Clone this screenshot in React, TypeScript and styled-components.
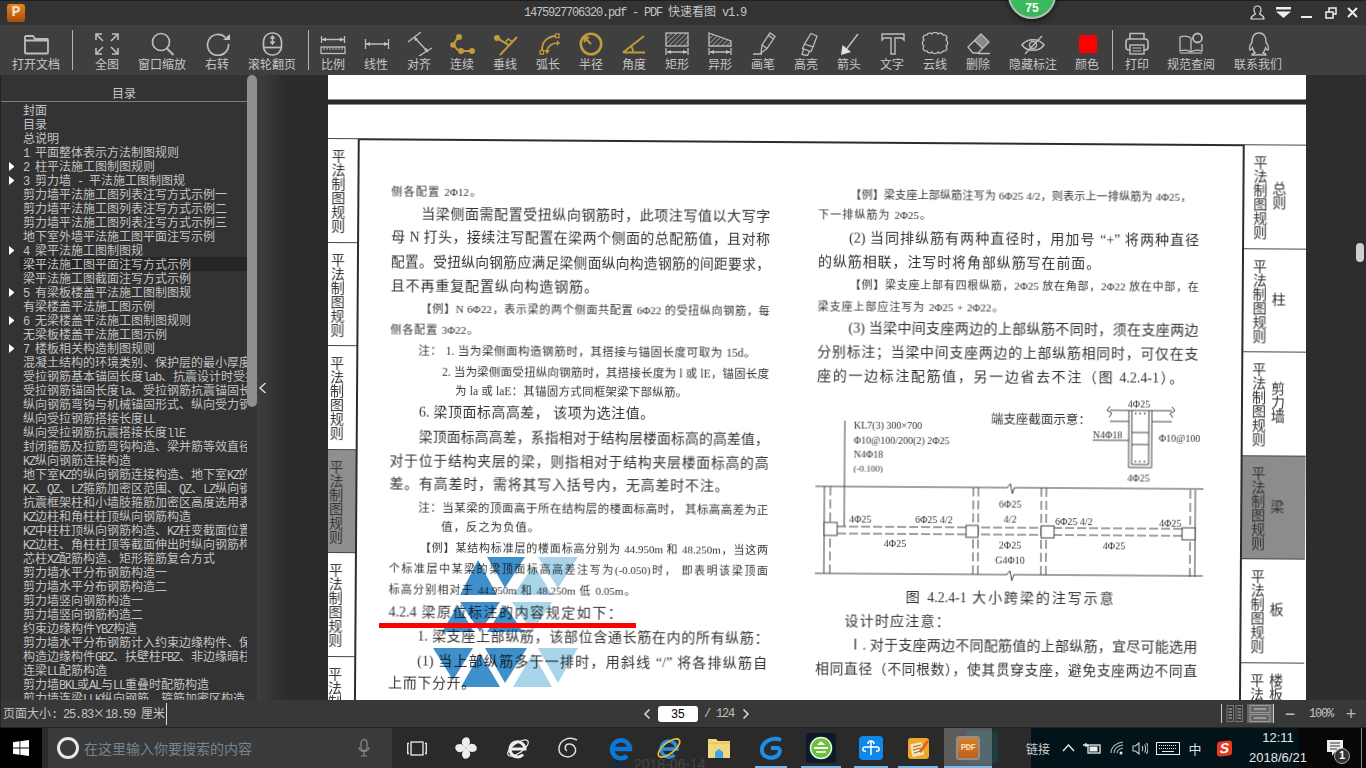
import React from 'react';
import styled, { createGlobalStyle } from 'styled-components';

const UI = '"Noto Sans CJK SC", sans-serif';
const SCAN = '"Liberation Serif", "Noto Sans CJK SC", serif';

const Global = createGlobalStyle`
  html, body { margin: 0; padding: 0; background: #2d2d2d; overflow: hidden; }
  * { box-sizing: border-box; }
`;

const App_ = styled.div`
  position: relative;
  width: 1366px;
  height: 768px;
  overflow: hidden;
  font-family: ${UI};
  font-size: 12px;
  color: #c8c8c8;
  background: #2d2d2d;
`;

/* ---------- title bar ---------- */
const TitleBar = styled.div`
  height: 25px;
  background: #333;
  border-top: 1px solid #1e1e1e;
  display: flex;
  align-items: center;
  padding-left: 7px;
`;
const Logo = styled.div`
  width: 18px;
  height: 18px;
  border-radius: 3px;
  background: linear-gradient(#e8851f, #a84d0a);
  color: #f4e2c8;
  font: bold 15px/18px "Liberation Mono", monospace;
  text-align: center;
  margin-top: -1px;
`;
const TitleText = styled.div`
  margin-left: 499px;
  color: #c4c4c4;
  white-space: pre;
  line-height: 14px;
  margin-top: -2px;
`;
const Controls = styled.div`
  margin-left: auto;
  display: flex;
  padding-right: 6px;
  margin-top: -1px;
`;
const Ctl = styled.div<{ $w: number }>`
  width: ${(p) => p.$w}px;
  display: flex;
  justify-content: center;
  align-items: center;
  height: 24px;
`;
const Badge = styled.div`
  position: absolute;
  left: 1008px;
  top: -29px;
  width: 48px;
  height: 48px;
  border-radius: 50%;
  background: linear-gradient(#3cc766, #3bb45a);
  border: 2px solid #b5bdb7;
  box-shadow: 0 2px 5px rgba(0, 0, 0, 0.6);
  color: #fff;
  font: bold 12px/14px "Liberation Sans", sans-serif;
  text-align: center;
  padding-top: 28px;
`;

/* ---------- toolbar ---------- */
const ToolBar = styled.div`
  height: 50px;
  background: #3f3f3f;
  display: flex;
  align-items: flex-start;
`;
const ToolGroup = styled.div<{ $pl?: number; $pr?: number }>`
  display: flex;
  padding-left: ${(p) => p.$pl ?? 0}px;
  padding-right: ${(p) => p.$pr ?? 0}px;
`;
const ToolSep = styled.div`
  width: 1px;
  height: 40px;
  margin-top: 5px;
  background: #b4b4b4;
`;
const Tool = styled.div<{ $w: number }>`
  width: ${(p) => p.$w}px;
  padding-top: 7px;
  display: flex;
  flex-direction: column;
  align-items: center;
`;
const ToolLabel = styled.div`
  line-height: 14px;
  margin-top: 1px;
  white-space: nowrap;
  color: #c6c6c6;
`;
const Ico = styled.svg.attrs({ viewBox: '0 0 28 24', width: 28, height: 24 })<{ $gold?: boolean }>`
  display: block;
  fill: none;
  stroke: ${(p) => (p.$gold ? '#c29a3c' : '#bdbdbd')};
  stroke-width: ${(p) => (p.$gold ? 2 : 1.3)};
`;

/* ---------- body ---------- */
const Body = styled.div`
  height: 625px;
  display: flex;
`;
const Sidebar = styled.div`
  width: 257px;
  display: flex;
  background: #333;
  border-left: 1px solid #222;
`;
const TocPane = styled.div`
  width: 246px;
  overflow: hidden;
`;
const TocHead = styled.div`
  height: 27px;
  border-bottom: 1px solid #7c7c7c;
  text-align: center;
  line-height: 35px;
  color: #c8c8c8;
  margin-bottom: 1px;
`;
const TocRow = styled.div`
  height: 14px;
  line-height: 14px;
  display: flex;
  white-space: pre;
  color: #c4c4c4;
  padding-left: 8px;
`;
const Caret = styled.div<{ $on?: boolean }>`
  flex: none;
  width: 12px;
  height: 9px;
  margin-top: 3px;
  border-left: ${(p) => (p.$on ? '5px solid #fff' : '0')};
  border-top: ${(p) => (p.$on ? '4.5px solid transparent' : '0')};
  border-bottom: ${(p) => (p.$on ? '4.5px solid transparent' : '0')};
`;
const TocText = styled.div<{ $sel?: boolean }>`
  flex: 1;
  padding-left: 3px;
  background: ${(p) => (p.$sel ? '#262626' : 'transparent')};
  overflow: hidden;
  margin-left: -1px;
`;
const Latin = styled.span`
  font-family: "Liberation Mono", monospace;
  font-size: 12px;
  letter-spacing: -1.2px;
`;
const Track = styled.div`
  width: 10px;
`;
const Thumb = styled.div`
  height: 332px;
  background: #8f8f8f;
  border-radius: 5px;
`;
const Gutter = styled.div`
  width: 71px;
  background: linear-gradient(90deg, #3e3e3e, #2c2c2c 28px);
  display: flex;
  align-items: center;
  padding-left: 1px;
`;
const Pages = styled.div`
  width: 978px;
  display: flex;
  flex-direction: column;
  background: #2b2b2b;
`;
const TopPage = styled.div`
  height: 25px;
  background: #fff;
  border-bottom: 1px solid #8a8a8a;
  flex: none;
`;
const Page = styled.div`
  position: relative;
  margin-top: 4px;
  height: 596px;
  flex: none;
  background: #fff;
  border-top: 1px solid #8a8a8a;
  overflow: hidden;
`;
const Sheet = styled.div`
  transform: rotate(0.39deg);
  transform-origin: 0 0;
  padding-top: 33px;
  width: 980px;
  height: 660px;
  display: grid;
  grid-template-columns: 30px 887px 63px;
  filter: blur(0.3px);
  color: #333;
`;
const Tabs = styled.div`
  display: flex;
  flex-direction: column;
`;
const LeftTab = styled.div<{ $on?: boolean }>`
  height: 103.5px;
  flex: none;
  border-top: 1px solid #444;
  background: ${(p) => (p.$on ? '#8f8f8f' : '#fff')};
  padding: 10px 12px 0 0;
  font: 14px/14px ${UI};
  color: #333;
  writing-mode: vertical-rl;
`;
const RightTab = styled.div<{ $on?: boolean }>`
  height: 103.5px;
  flex: none;
  border-top: 1px solid #444;
  background: ${(p) => (p.$on ? '#8c8c8c' : '#fff')};
  padding: 10px 0 0 9px;
  display: flex;
  gap: 5px;
  font: 14px/14px ${UI};
  color: #333;
`;
const Vert = styled.div<{ $center?: boolean }>`
  writing-mode: vertical-rl;
  align-self: ${(p) => (p.$center ? 'center' : 'flex-start')};
  margin-top: ${(p) => (p.$center ? '-12px' : '0')};
  white-space: nowrap;
`;
const Frame = styled.div`
  border: 2px solid #2c2c2c;
  border-bottom: 0;
  display: grid;
  grid-template-columns: 379px 382px;
  column-gap: 48px;
  padding-left: 32px;
  align-content: start;
`;
const Col = styled.div`
  display: flex;
  flex-direction: column;
`;
const Line = styled.div<{ $x: number; $w: number; $gap: number; $s: number }>`
  flex: none;
  height: 20px;
  line-height: 20px;
  margin-top: ${(p) => p.$gap}px;
  margin-left: ${(p) => p.$x}px;
  width: ${(p) => p.$w}px;
  font-family: ${SCAN};
  font-size: ${(p) => p.$s}px;
  text-align: justify;
  text-align-last: justify;
  text-justify: inter-character;
  overflow: hidden;
`;
const Diagram = styled.svg`
  flex: none;
  display: block;
  margin: 7.7px 0 0 -17px;
  width: 420px;
  height: 190px;
`;
const Watermark = styled.svg`
  position: absolute;
  left: 100px;
  top: 449px;
  width: 160px;
  height: 140px;
  mix-blend-mode: multiply;
`;
const RedMark = styled.div`
  position: absolute;
  left: 51px;
  top: 518px;
  width: 257px;
  height: 5px;
  background: #f00;
`;
const RightGutter = styled.div`
  flex: 1;
  background: #2d2d2d;
  padding: 168px 0 0 50px;
`;
const RightThumb = styled.div`
  width: 8px;
  height: 19px;
  border-radius: 4px;
  background: #cfcfcf;
`;

/* ---------- status bar ---------- */
const Status = styled.div`
  height: 28px;
  background: #383838;
  border-bottom: 1px solid #222;
  border-left: 1px solid #222;
  display: flex;
  align-items: center;
  padding-left: 2px;
  position: relative;
`;
const StatusText = styled.div`
  white-space: pre;
  color: #c4c4c4;
  line-height: 14px;
  width: 163px;
`;
const Caret2 = styled.div`
  width: 1px;
  height: 22px;
  background: #ddd;
`;
const Pager = styled.div`
  margin-left: 475px;
  display: flex;
  align-items: center;
  color: #bdbdbd;
  white-space: pre;
`;
const PageInput = styled.div`
  width: 40px;
  height: 16px;
  background: #fff;
  border-radius: 3px;
  color: #000;
  text-align: center;
  font: 12px/16px "Liberation Sans", sans-serif;
  margin: 0 6px 0 6px;
`;
const StatusRight = styled.div`
  margin-left: auto;
  display: flex;
  align-items: center;
  height: 100%;
`;
const VSep = styled.div`
  width: 1px;
  height: 19px;
  background: #ccc;
`;
const ViewBtn = styled.div<{ $on?: boolean }>`
  height: 19px;
  width: ${(p) => (p.$on ? 26 : 25)}px;
  display: flex;
  justify-content: center;
  align-items: center;
  background: ${(p) => (p.$on ? '#666' : 'transparent')};
`;
const Zoom = styled.div`
  display: flex;
  align-items: center;
  color: #c4c4c4;
  font: 12px/14px "Liberation Mono", monospace;
  letter-spacing: -1.2px;
`;
const ZoomPct = styled.div`
  width: 30px;
  text-align: center;
`;
const ZoomBtn = styled.div<{ $w: number }>`
  width: ${(p) => p.$w}px;
  text-align: center;
  font: 18px/18px "Liberation Sans", sans-serif;
  color: #aeb8c4;
  letter-spacing: 0;
`;

/* ---------- taskbar ---------- */
const Taskbar = styled.div`
  position: relative;
  height: 40px;
  display: flex;
  background: #2a2a2a;
  overflow: hidden;
`;
const WinBtn = styled.div`
  width: 42px;
  background: #000;
  display: flex;
  align-items: center;
  justify-content: center;
  margin-right: 6px;
`;
const Search = styled.div`
  width: 344px;
  background: #3a3a3a;
  display: flex;
  align-items: center;
  padding-left: 9px;
`;
const Cortana = styled.div`
  width: 22px;
  height: 22px;
  border-radius: 50%;
  border: 3px solid #e8e8e8;
  flex: none;
`;
const SearchText = styled.div`
  margin-left: 5px;
  font-size: 14px;
  color: #76848f;
  white-space: nowrap;
  width: 274px;
`;
const Cell = styled.div<{ $w: number; $u?: number; $on?: boolean }>`
  position: relative;
  z-index: 1;
  width: ${(p) => p.$w}px;
  height: 100%;
  flex: none;
  display: flex;
  align-items: center;
  justify-content: center;
  background: ${(p) => (p.$on ? 'rgba(255,255,255,0.24)' : 'transparent')};
  &::after {
    content: '';
    display: ${(p) => (p.$u ? 'block' : 'none')};
    position: absolute;
    bottom: 0;
    height: 2px;
    width: ${(p) => p.$u}px;
    background: #76b9ed;
  }
`;
const Peek = styled.div`
  position: absolute;
  left: 634px;
  top: 28px;
  font: 14px/16px "Liberation Sans", sans-serif;
  color: #454545;
  white-space: nowrap;
`;
const PeekIcon = styled.div`
  position: absolute;
  left: 610px;
  top: 30px;
  width: 17px;
  height: 17px;
  border-radius: 50%;
  background: #1c2b3b;
`;
const PeekBox = styled.div`
  position: absolute;
  left: 966px;
  top: 3px;
  width: 32px;
  height: 32px;
  border-radius: 3px;
  background: #1f3a40;
`;
const TaskFill = styled.div`
  flex: 1;
`;
const Tray = styled.div`
  position: relative;
  z-index: 2;
  width: 268px;
  flex: none;
  background: #03131a;
  display: flex;
  align-items: center;
  height: 100%;
  color: #dcdcdc;
`;
const TrayLink = styled.div`
  flex: none;
  width: 28px;
  margin-left: -5px;
  font-size: 12px;
  color: #cfcfcf;
  white-space: nowrap;
`;
const TraySlot = styled.div<{ $w: number }>`
  width: ${(p) => p.$w}px;
  flex: none;
  display: flex;
  align-items: center;
  justify-content: center;
  font-size: 13px;
  white-space: nowrap;
`;
const Clock = styled.div`
  width: 64px;
  flex: none;
  text-align: center;
  font: 13px/20px "Liberation Sans", sans-serif;
  color: #e6e6e6;
`;
const Sogou = styled.div`
  width: 15px;
  height: 15px;
  background: #e8391c;
  border-radius: 3px;
  color: #fff;
  font: italic bold 14px/15px "Liberation Sans", sans-serif;
  text-align: center;
  transform: skewY(-6deg);
`;
const Notify = styled.div`
  flex: 1;
  background: #070707;
  position: relative;
  display: flex;
  align-items: center;
  padding-left: 28px;
`;
const NotifyBadge = styled.div`
  position: absolute;
  left: 35px;
  top: 20px;
  width: 16px;
  height: 16px;
  border-radius: 50%;
  background: #333;
  border: 1.5px solid #aaa;
  color: #fff;
  font: bold 11px/13px "Liberation Sans", sans-serif;
  text-align: center;
`;
const EdgeLine = styled.div`
  position: absolute;
  right: 4px;
  top: 0;
  width: 1px;
  height: 100%;
  background: #8a8a8a;
`;
const PdfIcon = styled.div`
  width: 24px;
  height: 24px;
  border-radius: 3px;
  border: 2px solid #8f8f8f;
  background: linear-gradient(#d97f2b, #b9621a);
  color: #f7dcbc;
  font: bold 9px/20px "Liberation Mono", monospace;
  text-align: center;
  letter-spacing: -0.6px;
`;

/* ---------- helpers ---------- */
const L = ({ t }: { t: string }) => (
  <>
    {t.split(/([\x20-\x7e]+)/).map((p, i) => (i % 2 ? <Latin key={i}>{p}</Latin> : p))}
  </>
);

const hatch = (
  <defs>
    <pattern id="hatch" width="3.4" height="3.4" patternUnits="userSpaceOnUse" patternTransform="rotate(45)">
      <line x1="0" y1="0" x2="0" y2="3.4" stroke="#bdbdbd" strokeWidth="1.2" />
    </pattern>
  </defs>
);

const dim = (
  <>
    <path d="M3 16v7M25 16v7M4 20h20" />
    <path d="M4 20l4-2v4zM24 20l-4-2v4z" fill="#c4c4c4" stroke="none" />
  </>
);

const W = '#c4c4c4';
const G = '#c29a3c';
const tools: Record<string, React.ReactNode> = {
  folder: <Ico><path d="M3 20.5V5a1 1 0 0 1 1-1h7l2 3h12a1 1 0 0 1 1 1v12.5a1 1 0 0 1-1 1H4a1 1 0 0 1-1-1zM3 8.5h23" strokeWidth="1.8" /></Ico>,
  full: <Ico><path d="M3 8V2h6M3 2l7 7M19 2h6v6M25 2l-7 7M3 16v6h6M3 22l7-7M25 16v6h-6M25 22l-7-7" strokeWidth="1.6" /></Ico>,
  zoom: <Ico><circle cx="13" cy="10" r="8.5" strokeWidth="1.7" /><path d="M19 16.5l6.5 6.5" strokeWidth="2" /></Ico>,
  rotate: <Ico><path d="M22.5 5.5A10.5 10.5 0 1 0 25.5 12" strokeWidth="1.7" /><path d="M20 8h7V2z" fill={W} stroke="none" /></Ico>,
  mouse: <Ico><rect x="5.5" y="1" width="18" height="22" rx="8.5" strokeWidth="1.7" /><path d="M5.5 15.5h18" strokeWidth="1.7" /><path d="M14.5 3l3 3.5h-6zM14.5 13l3-3.500h-6z" fill={W} stroke="none" /><path d="M14.500 6v4" strokeWidth="1.6" /></Ico>,
  scale: <Ico><path d="M2.500 4v7M25.500 4v7M3 7.500h22" /><path d="M3 7.500l4-2v4zM25 7.500l-4-2v4z" fill={W} stroke="none" /><rect x="2" y="15" width="24" height="6.500" /><path d="M5 15v3M8 15v3M11 15v3M14 15v3M17 15v3M20 15v3M23 15v3" strokeWidth="1" /></Ico>,
  line: <Ico><path d="M3.500 7v10M26.500 7v10M4 12h22" /><path d="M4 12l4-2v4zM26 12l-4-2v4z" fill={W} stroke="none" /></Ico>,
  align: <Ico><path d="M3 10L16 0M14 24l13-8M9 5l14 15" /><path d="M9 5l1 4 3-2zM23 20l-1-4-3 2z" fill={W} stroke="none" /></Ico>,
  chain: <Ico $gold><path d="M11 5C8 8 6 10 6 13c2 4 5 6 7 6h11" strokeWidth="2" /><circle cx="11" cy="5" r="2" fill={G} /><circle cx="5" cy="13" r="1.800" fill={G} /><circle cx="13" cy="19" r="2" fill={G} /><circle cx="24" cy="19" r="2" fill={G} /></Ico>,
  perp: <Ico $gold><circle cx="6" cy="6" r="2" fill={G} /><path d="M6 6l13 8M26 5L9 23" strokeWidth="2" /><path d="M14 11l3-4 5 3" strokeWidth="1.500" /></Ico>,
  arc: <Ico $gold><path d="M8 18C8 10 13 5 21 4" /><rect x="6" y="18.500" width="3.600" height="3.600" strokeWidth="1.200" /><rect x="21.500" y="2" width="3.600" height="3.600" strokeWidth="1.200" /><path d="M13 20c0-5 4-9 11-9" strokeWidth="1.600" /><path d="M23 8l3 3-3 3zM10 18h6l-3 4z" fill={G} stroke="none" /></Ico>,
  radius: <Ico $gold><circle cx="14" cy="12" r="10.200" strokeWidth="2.600" /><path d="M14 12L8 6" /><path d="M6 4l7 1-6 6z" fill={G} stroke="none" /></Ico>,
  angle: <Ico $gold><path d="M3 20.500h22M3 20.500L24 4" /><path d="M13 20c0-2-.5-4-2-6" /></Ico>,
  rect: <Ico>{hatch}<rect x="3" y="1" width="22" height="13" fill="url(#hatch)" />{dim}</Ico>,
  shape: <Ico><path d="M3 1l22 8v5H3z" fill="url(#hatch)" />{dim}</Ico>,
  pen: <Ico><path d="M12 21l1-8L21 1l5 3.500-8 12zM13 13l5 3.500M19.500 3.500l5 3.500M4 22h9" /></Ico>,
  marker: <Ico><path d="M19 1.500l6 2.500-4 11-8.500-3zM12.500 12L21 15l-2 4.500-8.500-3zM11.500 17l-1.500 5.500 5.500 1 2-4" /></Ico>,
  arrow: <Ico><path d="M23 2L10 19" strokeWidth="1.500" /><path d="M6 23l1.500-10L16 20z" fill="#e0e0e0" stroke="none" /></Ico>,
  text: <Ico><path d="M4 2h22v6l-2-2h-7v16h-4V6H6L4 8z" strokeWidth="1.400" /></Ico>,
  cloud: <Ico><path d="M6 3a3 3 0 0 1 5-1 3.500 3.500 0 0 1 6 0 3 3 0 0 1 5 1 3 3 0 0 1 3 5 3.500 3.500 0 0 1 0 6 3 3 0 0 1-3 5 3 3 0 0 1-5 1 3.500 3.500 0 0 1-6 0 3 3 0 0 1-5-1 3 3 0 0 1-3-5 3.500 3.500 0 0 1 0-6 3 3 0 0 1 3-5z" /></Ico>,
  eraser: <Ico><path d="M17 2l8 8-6.300 6.500-8.200-8z" fill="#8a8a8a" stroke="none" /><path d="M17 2l8 8-11 11H9l-5-6zM10.500 8.500l8.200 8M14 21.500h12" /></Ico>,
  eye: <Ico><path d="M3 13c5-7 17-7 22 0-5 7-17 7-22 0z" strokeWidth="1.500" /><circle cx="14" cy="13" r="3.500" strokeWidth="1.500" /><path d="M23 4L6 22" strokeWidth="1.400" /></Ico>,
  color: <Ico><rect x="6" y="3" width="18" height="18" rx="2" fill="#f00" stroke="none" /></Ico>,
  print: <Ico><path d="M7 7V1.500h14V7" strokeWidth="1.600" /><rect x="3" y="7" width="22" height="11" rx="3" strokeWidth="1.600" /><rect x="7" y="13" width="14" height="9" fill="#3f3f3f" strokeWidth="1.400" /><path d="M9.500 16h9M9.500 19h9" strokeWidth="1.100" /></Ico>,
  book: <Ico><path d="M14 6C11 4 6 4 3 5v14c3-1 8-1 11 1 3-2 8-2 11-1v-7M14 6v14" /><circle cx="20.500" cy="6" r="4.500" strokeWidth="1.800" /><path d="M3 21h22" strokeWidth="1.200" /></Ico>,
  qq: <Ico><path d="M15 1C9 1 8 6 8 10c-2 3-3 6-2 8 1 0 2-1 2.500-2 .5 2 1.500 4 2.500 5-2 .5-3 1-3 2 3 .5 5 0 7-.5 2 .5 4 1 7 .5 0-1-1-1.500-3-2 1-1 2-3 2.500-5 .5 1 1.500 2 2.500 2 1-2 0-5-2-8 0-4-1-9-7-9z" strokeWidth="1.400" /></Ico>,
};

type TI = { l: string; i: string; w: number };
const g1: TI[] = [{ l: '打开文档', i: 'folder', w: 72 }];
const g2: TI[] = [
  { l: '全图', i: 'full', w: 55 },
  { l: '窗口缩放', i: 'zoom', w: 55 },
  { l: '右转', i: 'rotate', w: 55 },
  { l: '滚轮翻页', i: 'mouse', w: 55 },
];
const g3: TI[] = [
  ['比例', 'scale'], ['线性', 'line'], ['对齐', 'align'], ['连续', 'chain'], ['垂线', 'perp'], ['弧长', 'arc'],
  ['半径', 'radius'], ['角度', 'angle'], ['矩形', 'rect'], ['异形', 'shape'], ['画笔', 'pen'], ['高亮', 'marker'],
  ['箭头', 'arrow'], ['文字', 'text'], ['云线', 'cloud'], ['删除', 'eraser'],
].map(([l, i]) => ({ l, i, w: 43 }));
const g3b: TI[] = [
  { l: '隐藏标注', i: 'eye', w: 67 },
  { l: '颜色', i: 'color', w: 41 },
];
const g4: TI[] = [
  { l: '打印', i: 'print', w: 48 },
  { l: '规范查阅', i: 'book', w: 60 },
  { l: '联系我们', i: 'qq', w: 74 },
];
const renderTools = (a: TI[]) =>
  a.map((t) => (
    <Tool key={t.l} $w={t.w}>
      {tools[t.i]}
      <ToolLabel>{t.l}</ToolLabel>
    </Tool>
  ));

const toc: [string, boolean?, boolean?][] = [
  ['封面'], ['目录'], ['总说明'], ['1 平面整体表示方法制图规则'],
  ['2 柱平法施工图制图规则', true], ['3 剪力墙 - 平法施工图制图规', true],
  ['剪力墙平法施工图列表注写方式示例一'], ['剪力墙平法施工图列表注写方式示例二'], ['剪力墙平法施工图列表注写方式示例三'],
  ['地下室外墙平法施工图平面注写示例'], ['4 梁平法施工图制图规', true],
  ['梁平法施工图平面注写方式示例', false, true], ['梁平法施工图截面注写方式示例'],
  ['5 有梁板楼盖平法施工图制图规', true], ['有梁楼盖平法施工图示例'],
  ['6 无梁楼盖平法施工图制图规则', true], ['无梁板楼盖平法施工图示例'], ['7 楼板相关构造制图规则', true],
  ['混凝土结构的环境类别、保护层的最小厚度'], ['受拉钢筋基本锚固长度lab、抗震设计时受拉'],
  ['受拉钢筋锚固长度la、受拉钢筋抗震锚固长度'], ['纵向钢筋弯钩与机械锚固形式、纵向受力钢筋'],
  ['纵向受拉钢筋搭接长度LL'], ['纵向受拉钢筋抗震搭接长度llE'], ['封闭箍筋及拉筋弯钩构造、梁并筋等效直径'],
  ['KZ纵向钢筋连接构造'], ['地下室KZ的纵向钢筋连接构造、地下室KZ的'], ['KZ、QZ、LZ箍筋加密区范围、QZ、LZ纵向钢筋'],
  ['抗震框架柱和小墙肢箍筋加密区高度选用表'], ['KZ边柱和角柱柱顶纵向钢筋构造'], ['KZ中柱柱顶纵向钢筋构造、KZ柱变截面位置'],
  ['KZ边柱、角柱柱顶等截面伸出时纵向钢筋构造'], ['芯柱XZ配筋构造、矩形箍筋复合方式'], ['剪力墙水平分布钢筋构造一'],
  ['剪力墙水平分布钢筋构造二'], ['剪力墙竖向钢筋构造一'], ['剪力墙竖向钢筋构造二'], ['约束边缘构件YBZ构造'],
  ['剪力墙水平分布钢筋计入约束边缘构件、保'], ['构造边缘构件GBZ、扶壁柱FBZ、非边缘暗柱'], ['连梁LL配筋构造'],
  ['剪力墙BKL或AL与LL重叠时配筋构造'], ['剪力墙连梁LLK纵向钢筋、箍筋加密区构造'],
];

type Ln = [string, number, number, number, number];
const leftLines: Ln[] = [
  ['侧各配置 2Φ12。', 191, 392, 473, 11],
  ['当梁侧面需配置受扭纵向钢筋时，此项注写值以大写字', 214, 422, 771, 14],
  ['母 N 打头，接续注写配置在梁两个侧面的总配筋值，且对称', 237.3, 392, 771, 14],
  ['配置。受扭纵向钢筋应满足梁侧面纵向构造钢筋的间距要求，', 261.6, 392, 771, 13.8],
  ['且不再重复配置纵向构造钢筋。', 285.6, 392, 588, 14],
  ['【例】N 6Φ22，表示梁的两个侧面共配置 6Φ22 的受扭纵向钢筋，每', 308.3, 422, 771, 11],
  ['侧各配置 3Φ22。', 329, 392, 471, 11],
  ['注： 1. 当为梁侧面构造钢筋时，其搭接与锚固长度可取为 15d。', 350, 420, 748, 11.5],
  ['2. 当为梁侧面受扭纵向钢筋时，其搭接长度为 l 或 lE，锚固长度', 370.6, 444, 771, 11.5],
  ['为 la 或 laE：其锚固方式同框架梁下部纵筋。', 390, 457, 680, 11.5],
  ['6. 梁顶面标高高差， 该项为选注值。', 412.3, 421, 645, 14],
  ['梁顶面标高高差，系指相对于结构层楼面标高的高差值，', 436.6, 421, 771, 13.8],
  ['对于位于结构夹层的梁，则指相对于结构夹层楼面标高的高', 460.6, 392, 771, 13.8],
  ['差。有高差时，需将其写入括号内，无高差时不注。', 484.3, 392, 720, 14],
  ['注：当某梁的顶面高于所在结构层的楼面标高时， 其标高高差为正', 506.6, 421, 771, 11.5],
  ['值，反之为负值。', 525.6, 444, 533, 11.5],
  ['【例】某结构标准层的楼面标高分别为 44.950m 和 48.250m，当这两', 547.3, 423, 771, 11],
  ['个标准层中某梁的梁顶面标高高差注写为(-0.050)时， 即表明该梁顶面', 568.3, 392, 771, 11],
  ['标高分别相对于 44.950m 和 48.250m 低 0.05m。', 589, 392, 630, 11],
  ['4.2.4 梁原位标注的内容规定如下：', 611.6, 392, 614, 14],
  ['1. 梁支座上部纵筋，该部位含通长筋在内的所有纵筋：', 635.6, 421, 761, 14],
  ['(1) 当上部纵筋多于一排时，用斜线 “/” 将各排纵筋自', 660.6, 421, 771, 14],
  ['上而下分开。', 683.3, 392, 468, 14],
];
const rightTop: Ln[] = [
  ['【例】梁支座上部纵筋注写为 6Φ25 4/2，则表示上一排纵筋为 4Φ25，', 191.1, 851, 1192, 11],
  ['下一排纵筋为 2Φ25。', 211.4, 819, 923, 11],
  ['(2) 当同排纵筋有两种直径时，用加号 “+” 将两种直径', 235.4, 850, 1200, 14],
  ['的纵筋相联，注写时将角部纵筋写在前面。', 258.7, 819, 1090, 14],
  ['【例】梁支座上部有四根纵筋，2Φ25 放在角部，2Φ22 放在中部，在', 281.4, 851, 1200, 11],
  ['梁支座上部应注写为 2Φ25 + 2Φ22。', 302.7, 819, 996, 11],
  ['(3) 当梁中间支座两边的上部纵筋不同时，须在支座两边', 325.4, 850, 1200, 14],
  ['分别标注；当梁中间支座两边的上部纵筋相同时，可仅在支', 349.4, 819, 1200, 13.8],
  ['座的一边标注配筋值，另一边省去不注（图 4.2.4-1）。', 372.7, 819, 1174, 14],
];
const rightBottom: Ln[] = [
  ['图 4.2.4-1 大小跨梁的注写示意', 594.4, 909, 1117, 14],
  ['设计时应注意：', 618.1, 848, 942, 14],
  ['Ⅰ. 对于支座两边不同配筋值的上部纵筋，宜尽可能选用', 642.1, 852, 1201, 14],
  ['相同直径（不同根数），使其贯穿支座，避免支座两边不同直', 666.1, 819, 1201, 13.8],
];
const renderLines = (ls: Ln[], colX: number, start: number) => {
  let prev = start;
  return ls.map(([t, c, x, e, s]) => {
    const gap = c - prev - 20;
    prev = c;
    const tail = /[。：]$/.test(t) ? s * 0.8 : 0;
    return (
      <Line key={t} $x={x - colX} $w={e - x + tail} $gap={gap} $s={s}>
        {t}
      </Line>
    );
  });
};

const DT = ({ x, y, t, a, s }: { x: number; y: number; t: string; a?: 'middle'; s?: number }) => (
  <text x={x} y={y + 3.5} fontSize={s ?? 10} fill="#333" stroke="none" textAnchor={a} fontFamily={SCAN}>
    {t}
  </text>
);

const BeamDiagram = () => (
  <Diagram viewBox="800 395 420 190" fill="none" stroke="#444" strokeWidth="1">
    <path d="M845 422V528" />
    <DT x={854} y={426} t="KL7(3)  300×700" />
    <DT x={854} y={441} t="Φ10@100/200(2)  2Φ25" />
    <DT x={854} y={455} t="N4Φ18" />
    <DT x={854} y={469} t="(-0.100)" s={9} />
    <DT x={991} y={420} t="端支座截面示意：" s={12.5} />
    <DT x={1139} y={403} t="4Φ25" a="middle" />
    <DT x={1139} y={477} t="4Φ25" a="middle" />
    <DT x={1159} y={437} t="Φ10@100" />
    <DT x={1093} y={434} t="N4Φ18" />
    <path d="M1093 440H1129M1110 410H1172M1110 421H1129M1152 421H1172M1129 410V467H1152V410M1132 410V464H1149V410M1132 432H1149M1132 444H1149M1110 406l-3 4 5 3-3 4M1172 406l3 4-5 3 3 4" />
    <path d="M1135 413h11M1135 461h11" strokeWidth="1.6" strokeDasharray="1.5 3" />
    <path d="M816 488H1008l3-4 2 10 2-6H1204M816 575H1008l3-4 2 10 2-6H1204" />
    <path d="M825 488V575M1196 489V576" />
    <path d="M831 488V575M974 488V576M979 488V576M1042 488V576M1047 488V576M1191 489V576" strokeDasharray="9 4" />
    <path d="M838 528H1183M838 535H1183" strokeDasharray="9 3" />
    <g fill="#fff">
      <rect x="825" y="524" width="13" height="13" />
      <rect x="967" y="526" width="12" height="12" />
      <rect x="1042" y="526" width="13" height="12" />
      <rect x="1183" y="527" width="13" height="12" />
    </g>
    <DT x={850} y={520} t="4Φ25" />
    <DT x={916} y={520} t="6Φ25  4/2" />
    <DT x={1011} y={504} t="6Φ25" a="middle" />
    <DT x={1011} y={519} t="4/2" a="middle" />
    <DT x={1011} y={545} t="2Φ25" a="middle" />
    <DT x={1011} y={560} t="G4Φ10" a="middle" />
    <DT x={1056} y={521} t="6Φ25  4/2" />
    <DT x={1160} y={522} t="4Φ25" />
    <DT x={896} y={544} t="4Φ25" a="middle" />
    <DT x={1115} y={545} t="4Φ25" a="middle" />
  </Diagram>
);

const dark = [
  '478,560 460,595 497,595', '487,557 525,557 505,588', '460,602 500,602 480,632',
  '458,605 442,632 474,632', '505,605 487,632 523,632', '433,648 473,648 453,680',
  '485,648 527,648 505,683', '480,653 461,687 500,687',
];
const light = [
  '534,565 513,595 552,595', '538,557 578,557 558,588', '512,602 552,602 532,632',
  '533,653 513,687 552,687', '538,648 578,648 558,683',
];

const WinIcon = () => (
  <svg width="16" height="16" viewBox="0 0 16 16" fill="#fff">
    <path d="M0 2.200l6.500-.9v6.300H0zM7.300 1.200L16 0v7.600H7.300zM0 8.400h6.500v6.300L0 13.800zM7.300 8.400H16V16l-8.700-1.200z" />
  </svg>
);
const Task = ({ children }: { children: React.ReactNode }) => (
  <svg width="26" height="26" viewBox="0 0 26 26" fill="none">
    {children}
  </svg>
);

export default function App() {
  return (
    <App_>
      <Global />
      <TitleBar>
        <Logo>P</Logo>
        <TitleText>
          <L t="1475927706320.pdf - PDF " />
          快速看图
          <L t=" v1.9" />
        </TitleText>
        <Controls>
          <Ctl $w={28}>
            <svg width="15" height="15" viewBox="0 0 15 15" fill="none" stroke="#ddd" strokeWidth="1.2">
              <path d="M7.500 1C5 1 4 3 4 5c0 2 1 3 1.500 4C4 10 1 11 1 14h13c0-3-3-4-4.500-5C10 8 11 7 11 5c0-2-1-4-3.500-4z" />
            </svg>
          </Ctl>
          <Ctl $w={25}>
            <svg width="15" height="12" viewBox="0 0 15 12" fill="#eee">
              <path d="M0 0h15v2.500H0zM0 4.500h15L7.500 11z" />
            </svg>
          </Ctl>
          <Ctl $w={21}>
            <svg width="11" height="12" viewBox="0 0 11 12" fill="#eee">
              <path d="M0 9h11v2H0z" />
            </svg>
          </Ctl>
          <Ctl $w={28}>
            <svg width="12" height="12" viewBox="0 0 12 12" fill="none" stroke="#eee" strokeWidth="1.5">
              <path d="M1 5h7v6H1zM4 4.500V1h7v6H8.500" />
            </svg>
          </Ctl>
          <Ctl $w={15}>
            <svg width="11" height="11" viewBox="0 0 11 11" stroke="#eee" strokeWidth="2">
              <path d="M1 1l9 9M10 1l-9 9" />
            </svg>
          </Ctl>
        </Controls>
      </TitleBar>
      <Badge>75</Badge>

      <ToolBar>
        <ToolGroup>{renderTools(g1)}</ToolGroup>
        <ToolSep />
        <ToolGroup $pl={6.5} $pr={8.5}>{renderTools(g2)}</ToolGroup>
        <ToolSep />
        <ToolGroup $pl={2.5} $pr={4.5}>
          {renderTools(g3)}
          {renderTools(g3b)}
        </ToolGroup>
        <ToolSep />
        <ToolGroup>{renderTools(g4)}</ToolGroup>
      </ToolBar>

      <Body>
        <Sidebar>
          <TocPane>
            <TocHead>目录</TocHead>
            {toc.map(([t, c, s]) => (
              <TocRow key={t}>
                <Caret $on={c} />
                <TocText $sel={s}>
                  <L t={t} />
                </TocText>
              </TocRow>
            ))}
          </TocPane>
          <Track>
            <Thumb />
          </Track>
        </Sidebar>
        <Gutter>
          <svg width="10" height="12" viewBox="0 0 10 12" fill="none" stroke="#ddd" strokeWidth="1.5">
            <path d="M7.500 1L2 6l5.500 5" />
          </svg>
        </Gutter>
        <Pages>
          <TopPage />
          <Page>
            <Sheet>
              <Tabs>
                <LeftTab>平法制图规则</LeftTab>
                <LeftTab>平法制图规则</LeftTab>
                <LeftTab>平法制图规则</LeftTab>
                <LeftTab $on>平法制图规则</LeftTab>
                <LeftTab>平法制图规则</LeftTab>
                <LeftTab>平法制图规则</LeftTab>
              </Tabs>
              <Frame>
                <Col>{renderLines(leftLines, 392, 130)}</Col>
                <Col>
                  {renderLines(rightTop, 819, 130)}
                  <BeamDiagram />
                  {renderLines(rightBottom, 819, 570.4)}
                </Col>
              </Frame>
              <Tabs>
                {['总则', '柱', '剪力墙', '梁', '板'].map((t) => (
                  <RightTab key={t} $on={t === '梁'}>
                    <Vert>平法制图规则</Vert>
                    <Vert $center>{t}</Vert>
                  </RightTab>
                ))}
                <RightTab>
                  <Vert>平法制图规则</Vert>
                  <Vert>楼板相关构造</Vert>
                </RightTab>
              </Tabs>
            </Sheet>
            <Watermark viewBox="428 554 160 140">
              {dark.map((p) => <polygon key={p} points={p} fill="#3f90ca" />)}
              {light.map((p) => <polygon key={p} points={p} fill="#a9d5ea" />)}
            </Watermark>
            <RedMark />
          </Page>
        </Pages>
        <RightGutter>
          <RightThumb />
        </RightGutter>
      </Body>

      <Status>
        <StatusText>
          页面大小
          <L t=": 25.83" />×
          <L t="18.59 " />
          厘米
        </StatusText>
        <Caret2 />
        <Pager>
          <svg width="10" height="12" viewBox="0 0 10 12" fill="none" stroke="#ddd" strokeWidth="1.5">
            <path d="M7.500 1.500L3 6l4.500 4.500" />
          </svg>
          <PageInput>35</PageInput>
          <L t="/ 124" />
          <svg width="24" height="12" viewBox="0 0 24 12" fill="none" stroke="#ddd" strokeWidth="1.5">
            <path d="M9.500 1.500L14 6l-4.500 4.500" />
          </svg>
        </Pager>
        <StatusRight>
          <VSep />
          <ViewBtn>
            <svg width="18" height="17" viewBox="0 0 18 17" fill="none" stroke="#777">
              <rect x="1" y="0.5" width="6.5" height="16" />
              <rect x="10" y="0.5" width="6.5" height="16" />
              <path d="M2.500 4h3.500M2.500 7h3.500M2.500 10h3.500M2.500 13h3.500M11.500 4H15M11.500 7H15M11.500 10H15M11.500 13H15" stroke="#bbb" />
            </svg>
          </ViewBtn>
          <ViewBtn $on>
            <svg width="22" height="17" viewBox="0 0 22 17" fill="none" stroke="#999">
              <rect x="1" y="0.5" width="20" height="7" />
              <rect x="1" y="9.5" width="20" height="7" />
              <path d="M5 4h12M5 13h12" stroke="#ccc" />
            </svg>
          </ViewBtn>
          <VSep />
          <Zoom>
            <ZoomBtn $w={32}>−</ZoomBtn>
            <ZoomPct>100%</ZoomPct>
            <ZoomBtn $w={30}>+</ZoomBtn>
          </Zoom>
        </StatusRight>
      </Status>

      <Taskbar>
        <PeekIcon />
        <Peek>2018-06-14</Peek>
        <PeekBox />
        <WinBtn>
          <WinIcon />
        </WinBtn>
        <Search>
          <Cortana />
          <SearchText>在这里输入你要搜索的内容</SearchText>
          <svg width="12" height="18" viewBox="0 0 12 18" fill="none" stroke="#8a8a8a" strokeWidth="1.2">
            <rect x="3" y="0.7" width="6" height="11" rx="3" />
            <path d="M1 8c0 6 10 6 10 0M6 13v4M3 17h6" />
          </svg>
        </Search>
        <Cell $w={49}>
          <svg width="20" height="15" viewBox="0 0 20 15" fill="none" stroke="#eee" strokeWidth="1.3">
            <rect x="4" y="1" width="12" height="13" />
            <path d="M2 2.500H.7v10H2M18 2.500h1.300v10H18" />
          </svg>
        </Cell>
        <Cell $w={50}>
          <Task>
            <g fill="#eee">
              {[0, 90, 180, 270].map((r) => (
                <path key={r} d="M13 13C9 11 7 6 11 3c3-2 6 0 6 4 0 2-2 4-4 6z" transform={`rotate(${r} 13 13)`} />
              ))}
            </g>
          </Task>
        </Cell>
        <Cell $w={54}>
          <Task>
            <path d="M6 14h14a7.500 7.500 0 1 0-2 5.500" stroke="#eee" strokeWidth="3" />
            <ellipse cx="13" cy="13" rx="12" ry="5" transform="rotate(-35 13 13)" stroke="#eee" strokeWidth="1.2" />
          </Task>
        </Cell>
        <Cell $w={46}>
          <Task>
            <path d="M22 5C14 1 4 5 4 14c0 7 9 10 14 6 5-4 2-11-4-11-4 0-5 5-2 7" stroke="#ddd" strokeWidth="1.5" />
          </Task>
        </Cell>
        <Cell $w={60}>
          <Task>
            <path d="M4 14h18a9 9 0 1 0-3 7" stroke="#0b78d6" strokeWidth="4.5" />
          </Task>
        </Cell>
        <Cell $w={36}>
          <Task>
            <path d="M6 14h15a8 8 0 1 0-2.500 6" stroke="#2b8fe0" strokeWidth="3.5" />
            <ellipse cx="13" cy="13" rx="13" ry="5.500" transform="rotate(-38 13 13)" stroke="#f0c330" strokeWidth="1.6" />
          </Task>
        </Cell>
        <Cell $w={64}>
          <Task>
            <path d="M2 4h8l2 2h12v17H2z" fill="#f3d77c" />
            <path d="M2 8h22" stroke="#e0b84f" />
            <path d="M9 23v-6l4-3 4 3v6z" fill="#3da6e6" />
          </Task>
        </Cell>
        <Cell $w={40} $u={32}>
          <Task>
            <path d="M23 5C13 1 3 8 4 16c1 7 11 9 16 4 3-3 2-7-1-7h-6" stroke="#1b8fe8" strokeWidth="4" />
          </Task>
        </Cell>
        <Cell $w={60} $u={40}>
          <svg width="30" height="30" viewBox="0 0 30 30" fill="none">
            <rect width="30" height="30" rx="3" fill="#0c1a2b" />
            <circle cx="15" cy="15" r="10.5" fill="#6cc13c" stroke="#e8f5e0" strokeWidth="1.5" />
            <path d="M8 15h14" stroke="#fff" strokeWidth="2" />
            <path d="M11 12l4-4 4 4z" fill="#fff" />
            <path d="M10 19h10" stroke="#fff" strokeWidth="1.5" />
          </svg>
        </Cell>
        <Cell $w={40} $u={34}>
          <svg width="24" height="24" viewBox="0 0 24 24" fill="none">
            <rect width="24" height="24" rx="4" fill="#1187e8" />
            <path d="M12 5v14M6 11h12M9 8c0-4 6-4 6 0M6 11c-3 0-3 5 1 4M18 11c3 0 3 5-1 4" stroke="#fff" strokeWidth="1.5" />
          </svg>
        </Cell>
        <Cell $w={53} $u={40}>
          <svg width="24" height="24" viewBox="0 0 24 24" fill="none">
            <rect x="2" y="2" width="21" height="21" rx="3" fill="#f1a52b" />
            <rect x="5" y="7" width="12" height="13" rx="1" fill="#f4e3b8" transform="rotate(-12 11 13)" />
            <path d="M7 11l8-2M7 14l8-2M8 17l7-2" stroke="#8a6b30" />
            <path d="M13 15l8-11 2 2-8 11z" fill="#e0601d" />
          </svg>
        </Cell>
        <Cell $w={48} $u={48} $on>
          <PdfIcon>PDF</PdfIcon>
        </Cell>
        <TaskFill />
        <Tray>
          <TrayLink>链接</TrayLink>
          <TraySlot $w={28}>
            <svg width="13" height="8" viewBox="0 0 13 8" fill="none" stroke="#e6e6e6" strokeWidth="1.4">
              <path d="M1 7l5.500-6L12 7" />
            </svg>
          </TraySlot>
          <TraySlot $w={20}>
            <svg width="18" height="12" viewBox="0 0 18 12" fill="none" stroke="#eee" strokeWidth="1.3">
              <path d="M0 3h3M3 1v4M3 3h2" />
              <rect x="5" y="3" width="12" height="8" />
              <rect x="6.5" y="4.5" width="8" height="5" fill="#eee" stroke="none" />
            </svg>
          </TraySlot>
          <TraySlot $w={30}>
            <svg width="14" height="14" viewBox="0 0 14 14" fill="none" stroke="#bbb" strokeWidth="1.1">
              <path d="M1 12C1 6 6 2 13 1M4 12C4 8 7 5 13 4M7 12c0-2 2-4 6-5" />
              <circle cx="11" cy="12" r="1.5" fill="#eee" stroke="none" />
            </svg>
          </TraySlot>
          <TraySlot $w={16}>
            <svg width="16" height="13" viewBox="0 0 16 13" fill="none" stroke="#ccc" strokeWidth="1.1">
              <path d="M1 4h2.500L7 1v11L3.500 9H1zM10 4c1 1 1 4 0 5M12.500 2.500c1.500 2 1.500 6 0 8M14.500 1c2 3 2 8 0 11" />
            </svg>
          </TraySlot>
          <TraySlot $w={40}>
            <svg width="24" height="13" viewBox="0 0 24 13" fill="none" stroke="#eee">
              <rect x="0.5" y="0.5" width="23" height="12" />
              <path d="M3 3.500h18M3 6.500h18" strokeDasharray="1 1" />
              <path d="M6 9.500h12" />
            </svg>
          </TraySlot>
          <TraySlot $w={14}>中</TraySlot>
          <TraySlot $w={44}>
            <Sogou>S</Sogou>
          </TraySlot>
          <Clock>
            12:11
            <br />
            2018/6/21
          </Clock>
        </Tray>
        <Notify>
          <svg width="16" height="17" viewBox="0 0 16 17" fill="#eee">
            <path d="M0 0h16v12H8l-3 4v-4H0z" />
            <path d="M3 3h10M3 6h10M3 9h7" stroke="#333" />
          </svg>
          <NotifyBadge>1</NotifyBadge>
          <EdgeLine />
        </Notify>
      </Taskbar>
    </App_>
  );
}
